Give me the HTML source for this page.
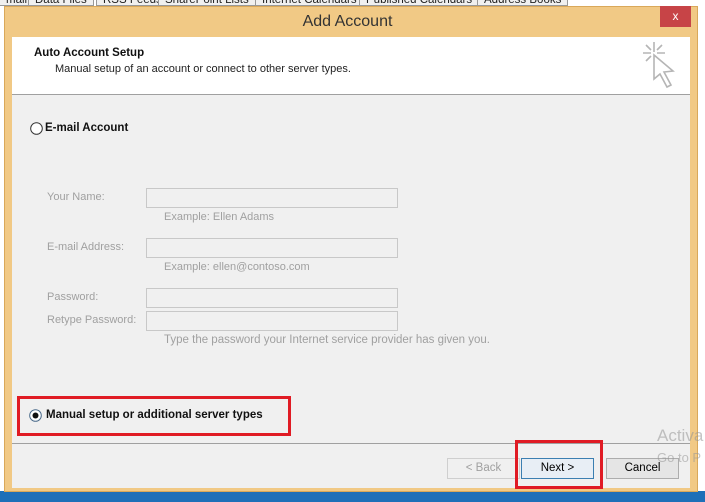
<!DOCTYPE html>
<html><head><meta charset="utf-8"><style>
*{margin:0;padding:0;box-sizing:border-box}
body{width:705px;height:502px;overflow:hidden;background:#fff;font-family:"Liberation Sans",sans-serif;position:relative}
.abs{position:absolute}
.tab{position:absolute;top:-6px;height:12px;border:1px solid #999;background:#f0f0f0;font-size:11.5px;line-height:10px;padding:0 6px;color:#222}
.lbl{position:absolute;font-size:11px;color:#a0a0a0}
.inp{position:absolute;left:146px;width:252px;height:20px;border:1px solid #c8c8c8;background:#f0f0f0}
.btn{position:absolute;top:458px;height:21px;border:1px solid #adadad;background:#e5e5e5;font-size:11.5px;text-align:center;line-height:19px;color:#000}
</style></head><body>
<div class="tab" style="left:0;border-left:none">mail</div>
<div class="tab" style="left:28px">Data Files</div>
<div class="tab" style="left:96px">RSS Feeds</div>
<div class="tab" style="left:158px">SharePoint Lists</div>
<div class="tab" style="left:255px">Internet Calendars</div>
<div class="tab" style="left:359px">Published Calendars</div>
<div class="tab" style="left:477px">Address Books</div>
<div class="abs" style="left:0;top:491px;width:705px;height:11px;background:#1e6fb8"></div>
<div class="abs" style="left:4px;top:6px;width:694px;height:486px;background:#f1c985;border:1px solid #d9a85a"></div>
<div class="abs" style="left:0;top:6px;width:705px;height:30px;text-align:center;font-size:16px;line-height:31px;color:#333;padding-right:10px">Add Account</div>
<div class="abs" style="left:660px;top:6px;width:31px;height:21px;background:#c74447;color:#fff;font-size:12px;text-align:center;line-height:20px">x</div>
<div class="abs" style="left:12px;top:37px;width:678px;height:451px;background:#f0f0f0"></div>
<div class="abs" style="left:12px;top:37px;width:678px;height:58px;background:#fff;border-bottom:1px solid #a0a0a0"></div>
<div class="abs" style="left:34px;top:47px;font-size:11.5px;font-weight:bold;color:#111">Auto Account Setup</div>
<div class="abs" style="left:55px;top:63px;font-size:11px;color:#222">Manual setup of an account or connect to other server types.</div>
<svg class="abs" style="left:630px;top:38px" width="50" height="56" viewBox="0 0 50 56" fill="none" stroke="#b5b5b5" stroke-width="1.6">
<path d="M24 4v10M13 15h8M27 15h8M16 7l5 5M32 7l-5 5M16 23l5-5"/>
<path d="M24 17l0 24 6-5 7 13 4-2-7-13 9-1z" fill="#fff"/>
</svg>
<svg class="abs" style="left:30px;top:122px" width="13" height="13"><circle cx="6.5" cy="6.5" r="5.8" fill="#fff" stroke="#333"/></svg>
<div class="abs" style="left:45px;top:122px;font-size:11.5px;font-weight:bold;color:#111">E-mail Account</div>
<div class="lbl" style="left:47px;top:191px">Your Name:</div>
<div class="inp" style="top:188px"></div>
<div class="lbl" style="left:164px;top:211px">Example: Ellen Adams</div>
<div class="lbl" style="left:47px;top:241px">E-mail Address:</div>
<div class="inp" style="top:238px"></div>
<div class="lbl" style="left:164px;top:261px">Example: ellen@contoso.com</div>
<div class="lbl" style="left:47px;top:291px">Password:</div>
<div class="inp" style="top:288px"></div>
<div class="lbl" style="left:47px;top:314px">Retype Password:</div>
<div class="inp" style="top:311px"></div>
<div class="lbl" style="left:164px;top:334px;font-size:11.5px">Type the password your Internet service provider has given you.</div>
<div class="abs" style="left:17px;top:396px;width:274px;height:40px;border:3px solid #e01b24"></div>
<svg class="abs" style="left:29px;top:409px" width="13" height="13"><circle cx="6.5" cy="6.5" r="5.8" fill="#fff" stroke="#4a6a8a"/><circle cx="6.5" cy="6.5" r="3" fill="#111"/></svg>
<div class="abs" style="left:46px;top:409px;font-size:11.5px;font-weight:bold;color:#111">Manual setup or additional server types</div>
<div class="abs" style="left:12px;top:443px;width:678px;height:1px;background:#a0a0a0"></div>
<div class="btn" style="left:447px;width:73px;color:#a0a0a0;border-color:#cfcfcf;background:#f0f0f0">&lt; Back</div>
<div class="btn" style="left:521px;width:73px;border-color:#3c7fb1;background:#e8eef5">Next &gt;</div>
<div class="btn" style="left:606px;width:73px">Cancel</div>
<div class="abs" style="left:515px;top:440px;width:88px;height:49px;border:3px solid #e01b24"></div>
<div class="abs" style="left:657px;top:426px;font-size:17px;color:rgba(150,150,150,.55)">Activa</div>
<div class="abs" style="left:657px;top:450px;font-size:13px;color:rgba(150,150,150,.55)">Go to P</div>
</body></html>
